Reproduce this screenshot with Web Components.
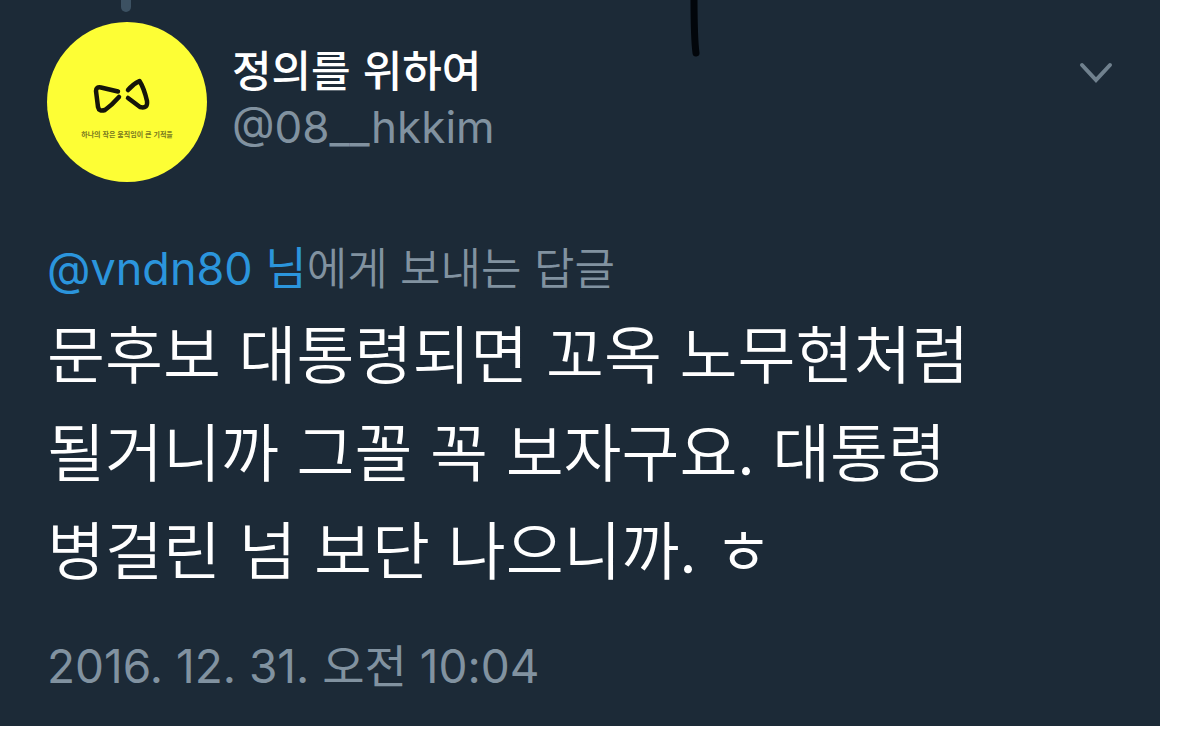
<!DOCTYPE html>
<html lang="ko">
<head>
<meta charset="utf-8">
<meta name="viewport" content="width=device-width, initial-scale=1">
<title>정의를 위하여</title>
<style>
body{margin:0;padding:0 20px 16px 0;background:#fff;font-family:Inter,"Noto Sans CJK KR",sans-serif}
</style>
</head>
<body>
<tweet-card>
  <tweet-author slot="author" name="정의를 위하여" handle="@08__hkkim"></tweet-author>
  <tweet-reply slot="reply" to="@vndn80 님">에게 보내는 답글</tweet-reply>
  <tweet-text slot="text">문후보 대통령되면 꼬옥 노무현처럼<br>될거니까 그꼴 꼭 보자구요. 대통령<br>병걸린 넘 보단 나으니까. ㅎ</tweet-text>
  <tweet-date slot="date" datetime="2016-12-31T10:04">2016. 12. 31. 오전 10:04</tweet-date>
</tweet-card>
<script>
const define = (name, render) => customElements.define(name, class extends HTMLElement {
  connectedCallback() {
    if (!this.shadowRoot) this.attachShadow({mode: 'open'}).innerHTML = render(this);
  }
});

define('tweet-avatar', () => `
<style>
:host{display:block;width:160px;height:160px;border-radius:50%;background:#fdfe35;overflow:hidden}
div{display:flex;flex-direction:column;align-items:center;padding-top:54px}
svg{display:block;margin-right:12px}
span{font:700 7px/12px "Noto Sans CJK KR",sans-serif;color:#77771f;white-space:nowrap;margin-top:12px}
</style>
<div>
<svg width="60" height="40" viewBox="0 0 60 40" fill="none" stroke="#15150a" stroke-width="4.500" stroke-linecap="round" stroke-linejoin="round" aria-hidden="true">
<path d="M27 15.500L10 11.500Q5 10.500 5 15L7 31Q8 36 14 34Q21 29 28 21"/>
<path d="M37 14Q42 8 48.500 5Q53 12 56 25Q57 33 49 31L37 22"/>
</svg>
<span>하나의 작은 움직임이 큰 기적을</span>
</div>`);

define('tweet-author', el => `
<style>
:host{display:flex;align-items:flex-start;gap:25px}
.names{display:flex;flex-direction:column;padding-top:18px}
a{text-decoration:none;white-space:nowrap}
.name{font:500 43px/56px "Noto Sans CJK KR",sans-serif;color:#fff}
.handle{font-size:44px;line-height:62px;font-weight:400;color:#8192a0}
</style>
<tweet-avatar></tweet-avatar>
<div class="names"><a class="name" href="#profile">${el.getAttribute('name')}</a><a class="handle" href="#profile">${el.getAttribute('handle')}</a></div>`);

define('tweet-menu', () => `
<style>
:host{display:block}
button{display:block;border:0;padding:0;background:none;cursor:pointer}
svg{display:block}
</style>
<button aria-label="메뉴"><svg width="36" height="24" viewBox="0 0 36 24" fill="none" stroke="#70818e" stroke-width="4" stroke-linecap="round" stroke-linejoin="miter"><path d="M4 4L18 19L32 4"/></svg></button>`);

define('tweet-reply', el => `
<style>
:host{display:flex;align-items:baseline;font-size:44px;line-height:60px;font-weight:350;color:#8192a0}
a{font-size:45px;font-weight:400;color:#2b95dc;text-decoration:none;white-space:nowrap}
</style>
<a href="#reply">${el.getAttribute('to')}</a><span><slot></slot></span>`);

define('tweet-text', () => `
<style>
:host{display:block;font:350 63px/98px "Noto Sans CJK KR",sans-serif;color:#fff}
</style><slot></slot>`);

define('tweet-date', el => `
<style>
:host{display:block;font-size:46px;line-height:60px;font-weight:400;color:#8192a0}
</style><time datetime="${el.getAttribute('datetime')}"><slot></slot></time>`);

define('tweet-card', () => `
<style>
:host{display:block}
article{position:relative;background:#1c2a37;padding:22px 46px 30px 47px}
header{display:flex;justify-content:space-between;align-items:flex-start}
tweet-menu{margin-top:39px}
.thread{position:absolute;left:121px;top:0;width:10px;height:12px;border-radius:0 0 5px 5px;background:#3c5162}
.mark{position:absolute;left:688px;top:0}
.reply{margin-top:57px}
.text{margin-top:3px}
.date{margin-top:40px}
</style>
<article>
<div class="thread"></div>
<svg class="mark" width="16" height="60" viewBox="0 0 16 60" fill="none" stroke="#02060b" stroke-width="7" stroke-linecap="round" aria-hidden="true"><path d="M6 -4C6 18 6 38 8 53"/></svg>
<header><slot name="author"></slot><tweet-menu></tweet-menu></header>
<div class="reply"><slot name="reply"></slot></div>
<div class="text"><slot name="text"></slot></div>
<div class="date"><slot name="date"></slot></div>
</article>`);
</script>
</body>
</html>
